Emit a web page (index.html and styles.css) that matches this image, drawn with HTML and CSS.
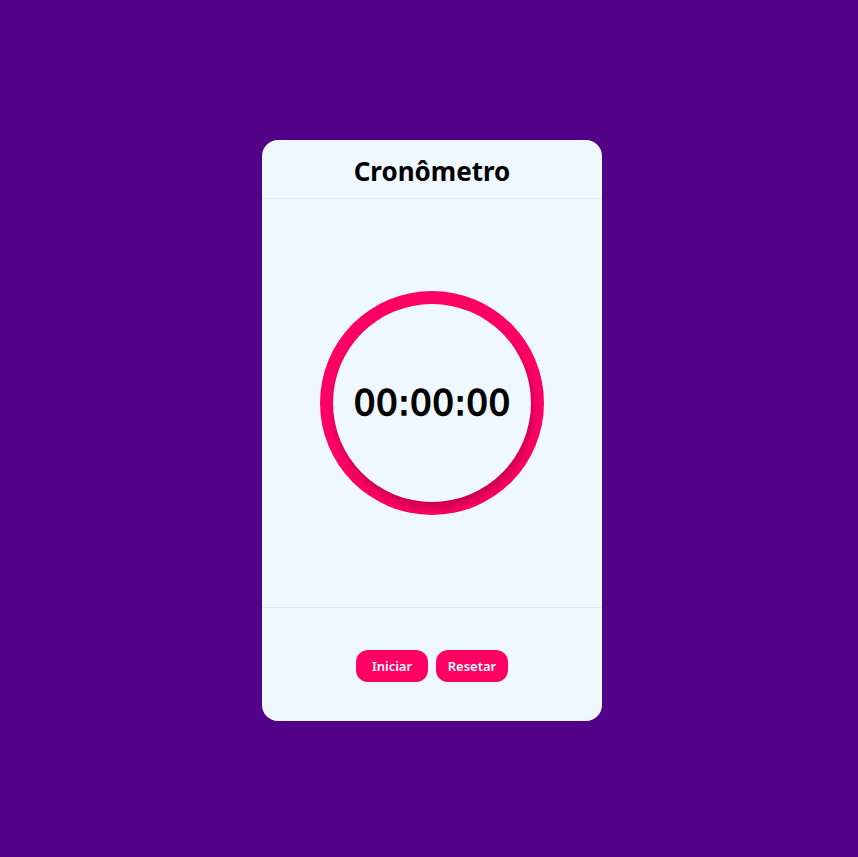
FILE: index.html
```html
<!DOCTYPE html>
<html lang="pt">
<head>
<meta charset="utf-8">
<title>Cronômetro</title>
<link rel="stylesheet" href="styles.css">
</head>
<body>
<div class="card">
  <header class="card-header"><h1>Cronômetro</h1></header>
  <main class="card-body">
    <div class="ring">
      <div class="face"><span class="time">00:00:00</span></div>
    </div>
  </main>
  <footer class="card-footer">
    <button class="btn">Iniciar</button>
    <button class="btn">Resetar</button>
  </footer>
</div>
</body>
</html>
```
FILE: styles.css
```css
html, body { margin: 0; padding: 0; }
body {
  background: #520087;
  width: 858px;
  height: 857px;
  display: flex;
  align-items: center;
  justify-content: center;
  font-family: "Noto Sans", sans-serif;
}
.card {
  width: 340px;
  height: 581px;
  background: #eff8ff;
  border-radius: 16px;
  display: flex;
  flex-direction: column;
  margin: 4px 0 0 6px;
}
.card-header {
  height: 58px;
  border-bottom: 1px solid #e2e6ea;
  display: flex;
  align-items: center;
  justify-content: center;
}
.card-header h1 {
  margin: 0;
  font-size: 26px;
  font-weight: 700;
  color: #000;
  padding-top: 4px;
}
.card-body {
  height: 408px;
  border-bottom: 1px solid #e2e6ea;
  display: flex;
  align-items: center;
  justify-content: center;
}
.ring {
  width: 224px;
  height: 224px;
  border-radius: 50%;
  background: #ff0062;
  display: flex;
  align-items: center;
  justify-content: center;
  overflow: hidden;
}
.face {
  width: 198px;
  height: 198px;
  border-radius: 50%;
  background: #eff8ff;
  box-shadow: 2px 6px 10px rgba(90, 0, 40, 0.35);
  display: flex;
  align-items: center;
  justify-content: center;
}
.time {
  font-family: "DejaVu Sans", sans-serif;
  font-size: 35px;
  font-weight: 400;
  color: #000;
  -webkit-text-stroke: 1.4px #000;
}
.card-footer {
  flex: 1;
  display: flex;
  justify-content: center;
  align-items: center;
  gap: 8px;
  padding-top: 2px;
}
.btn {
  width: 72px;
  height: 32px;
  border: none;
  border-radius: 12px;
  background: #ff0062;
  color: #fff;
  font-family: "Noto Sans", sans-serif;
  font-weight: 600;
  font-size: 13px;
  padding: 0;
}
```
